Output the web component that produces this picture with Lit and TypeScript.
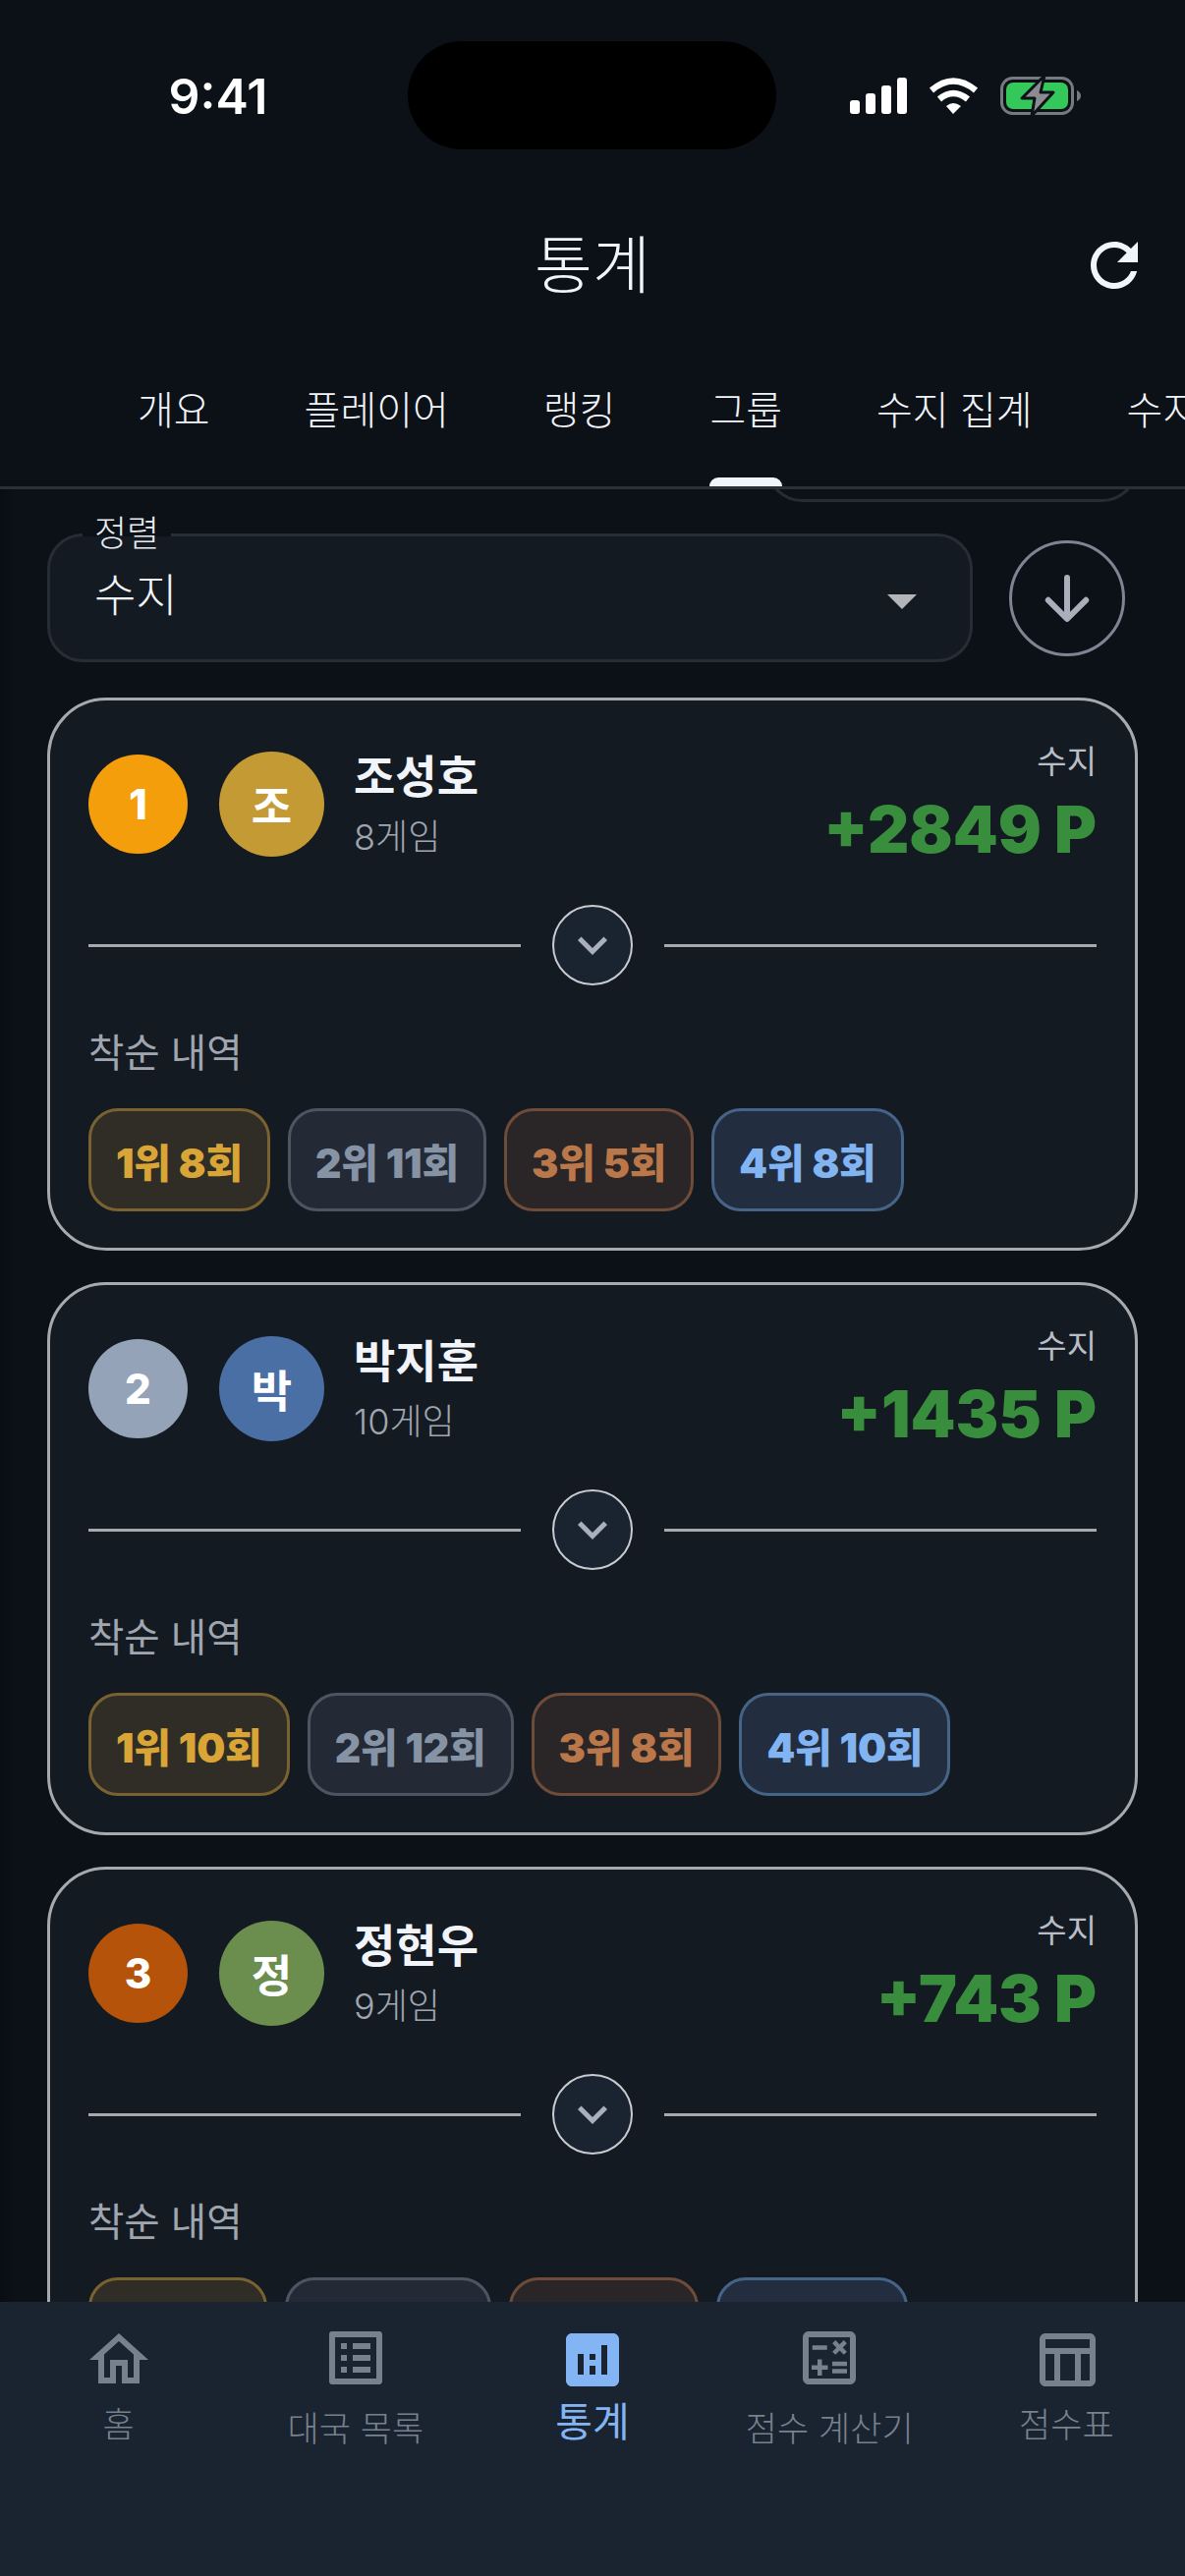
import { LitElement, css, html, svg } from "lit";
import { customElement } from "lit/decorators.js";
import { classMap } from "lit/directives/class-map.js";

interface Player {
  rank: number;
  rankColor: string;
  avatarColor: string;
  name: string;
  games: number;
  points: number;
  places: string[];
}

const players: Player[] = [
  { rank: 1, rankColor: "#f59e0b", avatarColor: "#c49a35", name: "조성호", games: 8, points: 2849, places: ["1위 8회", "2위 11회", "3위 5회", "4위 8회"] },
  { rank: 2, rankColor: "#94a3b8", avatarColor: "#4a6fa5", name: "박지훈", games: 10, points: 1435, places: ["1위 10회", "2위 12회", "3위 8회", "4위 10회"] },
  { rank: 3, rankColor: "#b45309", avatarColor: "#6b8e4e", name: "정현우", games: 9, points: 743, places: ["1위 7회", "2위 12회", "3위 9회", "4위 8회"] },
];

const tabs = ["개요", "플레이어", "랭킹", "그룹", "수지 집계", "수지 추이"];

const icons = {
  home: "M12 5.69l5 4.5V18h-2v-6H9v6H7v-7.81l5-4.5M12 3L2 12h3v8h6v-6h2v6h6v-8h3L12 3z",
  list: "M19 5v14H5V5h14m1.1-2H3.9c-.5 0-.9.4-.9.9v16.2c0 .4.4.9.9.9h16.2c.4 0 .9-.5.9-.9V3.9c0-.5-.5-.9-.9-.9zM11 7h6v2h-6V7zm0 4h6v2h-6v-2zm0 4h6v2h-6zM7 7h2v2H7zm0 4h2v2H7zm0 4h2v2H7z",
  stats: "M19 3H5c-1.1 0-2 .9-2 2v14c0 1.1.9 2 2 2h14c1.1 0 2-.9 2-2V5c0-1.1-.9-2-2-2zM9 17H7v-7h2v7zm4 0h-2v-3h2v3zm0-5h-2v-2h2v2zm4 5h-2V7h2v10z",
  calc: "M19 3H5c-1.1 0-2 .9-2 2v14c0 1.1.9 2 2 2h14c1.1 0 2-.9 2-2V5c0-1.1-.9-2-2-2zm0 16H5V5h14v14zM6.25 7.72h5v1.5h-5zM13 15.75h5v1.5h-5zm0-2.5h5v1.5h-5zM8 18h1.5v-2h2v-1.5h-2v-2H8v2H6V16h2zm6.09-7.05l1.41-1.41 1.41 1.41 1.06-1.06-1.41-1.42 1.41-1.41L16.91 6 15.5 7.41 14.09 6l-1.06 1.06 1.41 1.41-1.41 1.42z",
  table: "M20 3H5c-1.1 0-2 .9-2 2v14c0 1.1.9 2 2 2h15c1.1 0 2-.9 2-2V5c0-1.1-.9-2-2-2zm0 2v3H5V5h15zm-5 14h-5v-9h5v9zM5 10h3v9H5v-9zm12 9v-9h3v9h-3z",
  refresh: "M17.65 6.35C16.2 4.9 14.21 4 12 4c-4.42 0-7.99 3.58-7.99 8s3.57 8 7.99 8c3.73 0 6.84-2.55 7.73-6h-2.08c-.82 2.33-3.04 4-5.65 4-3.31 0-6-2.69-6-6s2.69-6 6-6c1.66 0 3.14.69 4.22 1.78L13 11h7V4l-2.35 2.35z",
  chevron: "M16.59 8.59L12 13.17 7.41 8.59 6 10l6 6 6-6z",
};

const navItems = [
  { icon: icons.home, label: "홈", shift: "" },
  { icon: icons.list, label: "대국 목록", shift: "low" },
  { icon: icons.stats, label: "통계", shift: "active" },
  { icon: icons.calc, label: "점수 계산기", shift: "low" },
  { icon: icons.table, label: "점수표", shift: "" },
];

const icon = (d: string) => html`<svg viewBox="0 0 24 24" width="72" height="72" fill="currentColor"><path d=${d}></path></svg>`;

const statusIcons = svg`
  <rect x="865" y="102" width="10" height="14" rx="3" fill="#fff"></rect>
  <rect x="881" y="95" width="10" height="21" rx="3" fill="#fff"></rect>
  <rect x="897" y="87" width="10" height="29" rx="3" fill="#fff"></rect>
  <rect x="913" y="79" width="10" height="37" rx="3" fill="#fff"></rect>
  <path d="M948 92 Q970 73 993 92" fill="none" stroke="#fff" stroke-width="6.5"></path>
  <path d="M956 101 Q970 89 985 101" fill="none" stroke="#fff" stroke-width="6.5"></path>
  <path d="M963 108 Q970 102 978 108 L970 116 Z" fill="#fff"></path>
  <rect x="1019.5" y="79.5" width="72" height="36" rx="11" fill="none" stroke="#77797d" stroke-width="3"></rect>
  <rect x="1024" y="84" width="63" height="27" rx="7" fill="#34c759"></rect>
  <path d="M1096 92 Q1100 94 1100 97.5 Q1100 101 1096 103 Z" fill="#77797d"></path>
  <path d="M1063 77 L1040 100 L1053 100 L1050 118 L1072 94 L1059 94 Z" fill="#8a8c90" stroke="#0d1118" stroke-width="3" stroke-linejoin="round"></path>
`;

@customElement("app-root")
export class AppRoot extends LitElement {
  static styles = css`
    :host {
      display: block;
      width: 1206px;
      height: 2622px;
      overflow: hidden;
      background: #0c1017;
      color: #f1f4f9;
      font-family: Inter, "Noto Sans CJK KR", sans-serif;
    }
    .screen {
      height: 100%;
      display: flex;
      flex-direction: column;
    }

    .status {
      height: 196px;
      flex: none;
      display: grid;
      grid-template-columns: 415px 375px 1fr;
      padding-top: 42px;
      box-sizing: border-box;
    }
    .time {
      font-size: 50px;
      font-weight: 600;
      color: #fff;
      line-height: 112px;
      text-align: center;
      padding-left: 29px;
    }
    .island {
      height: 110px;
      border-radius: 55px;
      background: #000;
    }
    .status-icons {
      margin: 28px 0 0 70px;
    }

    .titlebar {
      height: 140px;
      flex: none;
      display: flex;
      align-items: center;
      justify-content: center;
      position: relative;
      font-size: 64px;
      font-weight: 300;
      padding-bottom: 3px;
      box-sizing: border-box;
    }
    .refresh {
      position: absolute;
      right: 36px;
      top: 38px;
      color: #f1f4f9;
      display: flex;
    }

    .tabs {
      height: 162px;
      flex: none;
      box-sizing: border-box;
      border-bottom: 3px solid #2a2f38;
      display: flex;
      padding-left: 92px;
      overflow: hidden;
      white-space: nowrap;
    }
    .tab {
      flex: none;
      padding: 4px 48px 0;
      font-size: 40px;
      font-weight: 300;
      line-height: 1;
      position: relative;
      display: flex;
      align-items: center;
      height: 159px;
      box-sizing: border-box;
    }
    .tab.on::after {
      content: "";
      position: absolute;
      left: 48px;
      right: 48px;
      bottom: -1px;
      height: 10px;
      border-radius: 9px 9px 0 0;
      background: #f1f4f9;
    }

    .content {
      flex: 1;
      min-height: 0;
      overflow: hidden;
      padding: 0 48px;
      background: linear-gradient(90deg, #090c12 0, #0c1017 14px);
    }
    .ghost {
      margin: -23px 0 0 732px;
      width: 378px;
      height: 36px;
      box-sizing: border-box;
      border: 3px solid #262c35;
      border-top: 0;
      border-radius: 0 0 36px 36px;
    }
    .sort {
      display: flex;
      align-items: center;
      gap: 37px;
      margin-top: 32px;
      height: 131px;
    }
    .select {
      flex: none;
      width: 942px;
      height: 131px;
      box-sizing: border-box;
      border: 3px solid #272d36;
      border-radius: 36px;
      background: #141a22;
      display: flex;
      align-items: center;
      justify-content: space-between;
      padding: 0 54px 0 45px;
      position: relative;
      font-size: 46px;
      font-weight: 300;
    }
    .select span {
      margin-bottom: 14px;
    }
    .select svg {
      margin-top: 8px;
    }
    .select label {
      position: absolute;
      left: 33px;
      top: -24px;
      padding: 0 12px;
      font-size: 36px;
      line-height: 42px;
      font-weight: 300;
      color: #e8ebf0;
      background: linear-gradient(#0c1017 24px, transparent 24px);
    }
    .round {
      flex: none;
      width: 118px;
      height: 118px;
      border-radius: 50%;
      box-sizing: border-box;
      border: 3px solid #7d8592;
      display: flex;
      align-items: center;
      justify-content: center;
    }

    .card {
      height: 563px;
      box-sizing: border-box;
      margin-top: 36px;
      border: 3px solid #a6a9ae;
      border-radius: 60px;
      background: #141a22;
      padding: 39px 39px 0;
    }
    .card + .card {
      margin-top: 32px;
    }
    .head {
      display: flex;
      align-items: flex-start;
      height: 169px;
    }
    .rank {
      width: 101px;
      height: 101px;
      margin-top: 16px;
      border-radius: 50%;
      display: flex;
      align-items: center;
      justify-content: center;
      font-size: 42px;
      font-weight: 800;
      color: #fff;
    }
    .avatar {
      width: 107px;
      height: 107px;
      margin: 13px 30px 0 32px;
      border-radius: 50%;
      display: flex;
      align-items: center;
      justify-content: center;
      font-size: 45px;
      font-weight: 700;
      color: #fff;
    }
    .who {
      flex: 1;
      padding-top: 7px;
    }
    .name {
      font-size: 46px;
      font-weight: 600;
      line-height: 62px;
    }
    .games {
      font-size: 36px;
      font-weight: 300;
      line-height: 50px;
      margin-top: 6px;
      color: #a0a6b0;
    }
    .score {
      text-align: right;
    }
    .score small {
      display: block;
      font-size: 33px;
      font-weight: 400;
      line-height: 46px;
      color: #b8bdc6;
    }
    .score b {
      display: block;
      font-size: 65.5px;
      font-weight: 900;
      line-height: 78px;
      margin-top: 8px;
      color: #388e3c;
    }

    .rule {
      display: flex;
      align-items: center;
      gap: 32px;
      height: 82px;
    }
    .rule i {
      flex: 1;
      height: 3px;
      background: #a6a9ae;
    }
    .toggle {
      flex: none;
      width: 82px;
      height: 82px;
      box-sizing: border-box;
      border: 2px solid #c9cbd0;
      border-radius: 50%;
      background: #1a2330;
      color: #a9b0bc;
      display: flex;
      align-items: center;
      justify-content: center;
    }
    .toggle svg {
      width: 60px;
      height: 60px;
    }
    .section {
      font-size: 39.5px;
      font-weight: 400;
      line-height: 56px;
      margin-top: 41px;
      color: #a0a6b0;
    }
    .places {
      display: flex;
      gap: 18px;
      margin-top: 28px;
    }
    .place {
      height: 105px;
      box-sizing: border-box;
      padding: 0 25px;
      border: 3px solid;
      border-radius: 30px;
      display: flex;
      align-items: center;
      font-size: 41px;
      font-weight: 900;
      letter-spacing: -0.2px;
      white-space: nowrap;
    }
    .p0 { background: #2f2d26; border-color: #7a6230; color: #d9a537; }
    .p1 { background: #232a35; border-color: #4d5563; color: #8593a5; }
    .p2 { background: #2a2526; border-color: #6e4c38; color: #b9774a; }
    .p3 { background: #222e3f; border-color: #466487; color: #83b4f2; }

    .nav {
      height: 279px;
      flex: none;
      box-sizing: border-box;
      background: #1a2330;
      padding-top: 23px;
      display: grid;
      grid-template-columns: repeat(5, 1fr);
      color: #77818e;
    }
    .nav-item {
      display: flex;
      flex-direction: column;
      align-items: center;
      font-size: 35px;
      font-weight: 300;
      line-height: 50px;
    }
    .nav-item svg {
      margin-bottom: 5px;
    }
    .nav-item.low svg {
      margin: -2px 0 11px;
    }
    .nav-item.active {
      color: #83b5f5;
      font-size: 41px;
      font-weight: 400;
    }
    .nav-item.active svg {
      margin-bottom: 2px;
    }
  `;

  private renderCard(p: Player) {
    return html`
      <article class="card">
        <div class="head">
          <div class="rank" style="background:${p.rankColor}">${p.rank}</div>
          <div class="avatar" style="background:${p.avatarColor}">${p.name[0]}</div>
          <div class="who">
            <div class="name">${p.name}</div>
            <div class="games">${p.games}게임</div>
          </div>
          <div class="score">
            <small>수지</small>
            <b>+${p.points} P</b>
          </div>
        </div>
        <div class="rule">
          <i></i>
          <div class="toggle">${icon(icons.chevron)}</div>
          <i></i>
        </div>
        <div class="section">착순 내역</div>
        <div class="places">
          ${p.places.map((t, i) => html`<div class="place p${i}">${t}</div>`)}
        </div>
      </article>
    `;
  }

  render() {
    return html`
      <div class="screen">
        <div class="status">
          <div class="time">9:41</div>
          <div class="island"></div>
          <svg class="status-icons" viewBox="860 70 245 55" width="245" height="55">${statusIcons}</svg>
        </div>
        <div class="titlebar">
          통계
          <span class="refresh">${icon(icons.refresh)}</span>
        </div>
        <div class="tabs">
          ${tabs.map((t, i) => html`<div class=${classMap({ tab: true, on: i === 3 })}>${t}</div>`)}
        </div>
        <main class="content">
          <div class="ghost"></div>
          <div class="sort">
            <div class="select">
              <label>정렬</label>
              <span>수지</span>
              <svg width="30" height="15" viewBox="0 0 30 15"><path d="M0 0h30L15 15z" fill="#b4b5b8"></path></svg>
            </div>
            <div class="round">
              <svg viewBox="0 0 24 24" width="72" height="72" fill="none" stroke="#a9b0bc" stroke-width="2" stroke-linecap="round" stroke-linejoin="round"><path d="M12 5v13.6M5.6 12.6 12 19l6.4-6.4"></path></svg>
            </div>
          </div>
          ${players.map((p) => this.renderCard(p))}
        </main>
        <nav class="nav">
          ${navItems.map(
            (n) => html`<div class="nav-item ${n.shift}">${icon(n.icon)}<span>${n.label}</span></div>`
          )}
        </nav>
      </div>
    `;
  }
}
